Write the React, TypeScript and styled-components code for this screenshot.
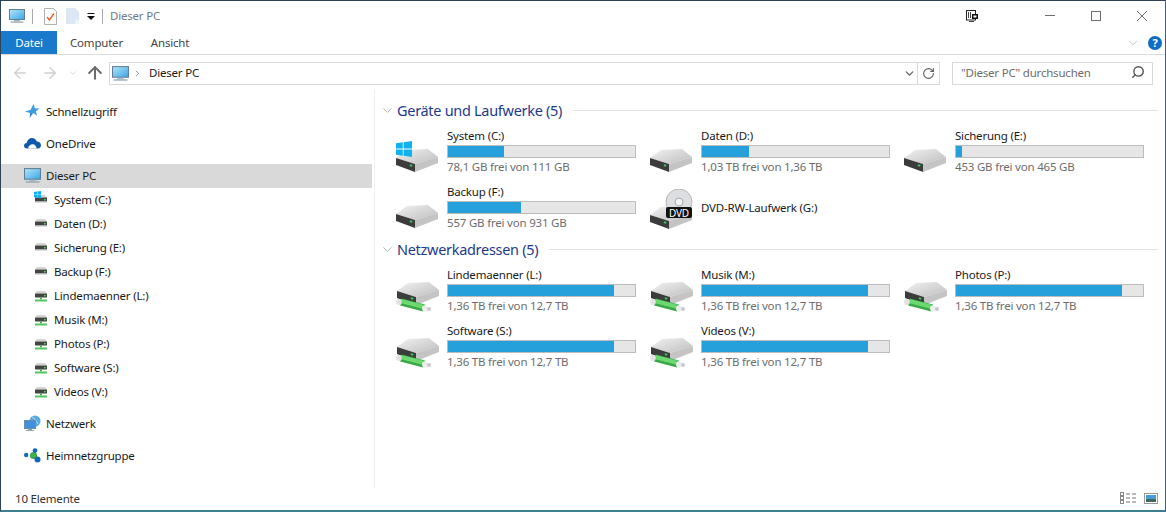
import React from "react";
import styled, { createGlobalStyle } from "styled-components";
import { ArrowLeft, ArrowRight, ArrowUp, ChevronDown, ChevronRight, RotateCw, Search } from "lucide-react";

const GlobalStyle = createGlobalStyle`
  html, body {
    margin: 0;
    padding: 0;
    background: #fff;
  }
  * {
    box-sizing: border-box;
  }
`;

const Window = styled.div`
  width: 1166px;
  height: 512px;
  display: flex;
  flex-direction: column;
  overflow: hidden;
  background: #fff;
  border: 1px solid #2d4254;
  border-right-color: #2b6a8f;
  border-bottom: 2px solid #3d7f8f;
  font-family: "Noto Sans", "Open Sans", sans-serif;
  font-size: 11.5px;
  letter-spacing: -0.2px;
  color: #1a1a1a;
`;

const TitleBar = styled.div`
  height: 30px;
  display: flex;
  align-items: center;
  padding-left: 8px;
`;

const QuickSlot = styled.div<{ $width: number }>`
  width: ${(p) => p.$width}px;
  display: flex;
  align-items: center;
  justify-content: center;
`;

const Separator = styled.div`
  width: 1px;
  height: 15px;
  background: #a9a9a9;
`;

const TitleText = styled.div`
  color: #6f7c88;
  padding-bottom: 2px;
`;

const TitleSpacer = styled.div`
  flex: 1;
`;

const PinSlot = styled.div`
  display: flex;
  margin-right: 49px;
`;

const WindowButton = styled.div`
  width: 46px;
  display: flex;
  justify-content: center;
`;

const Ribbon = styled.div`
  height: 24px;
  display: flex;
  align-items: stretch;
  border-bottom: 1px solid #dadbdc;
`;

const Tab = styled.div<{ $active?: boolean; $width: number }>`
  width: ${(p) => p.$width}px;
  display: flex;
  align-items: center;
  justify-content: center;
  background: ${(p) => (p.$active ? "#1979ca" : "transparent")};
  color: ${(p) => (p.$active ? "#fff" : "#444")};
`;

const RibbonRight = styled.div`
  margin-left: auto;
  display: flex;
  align-items: center;
  gap: 8px;
  padding-right: 3px;
  color: #a6a6a6;
`;

const HelpBadge = styled.div`
  width: 14px;
  height: 14px;
  border-radius: 50%;
  background: #0f6cc4;
  color: #fff;
  font-size: 11px;
  font-weight: 700;
  line-height: 14px;
  text-align: center;
`;

const AddressRow = styled.div`
  height: 35px;
  display: flex;
  align-items: center;
  padding-top: 1px;
`;

const NavArrows = styled.div`
  width: 108px;
  display: flex;
  align-items: center;
  padding-left: 4px;
`;

const NavArrow = styled.div<{ $width: number; $color: string }>`
  width: ${(p) => p.$width}px;
  display: flex;
  justify-content: center;
  color: ${(p) => p.$color};
`;

const AddressBox = styled.div`
  width: 831px;
  height: 23px;
  display: flex;
  align-items: center;
  border: 1px solid #d9d9d9;
  padding-left: 2px;
`;

const Crumb = styled.div`
  margin-left: 7px;
  padding-bottom: 2px;
  color: #1a1a1a;
`;

const CrumbChevron = styled.div`
  display: flex;
  margin-left: 4px;
  color: #666;
`;

const AddressTools = styled.div`
  margin-left: auto;
  display: flex;
  align-items: center;
  height: 100%;
  color: #5f5f5f;
`;

const AddressTool = styled.div<{ $divided?: boolean }>`
  width: ${(p) => (p.$divided ? 22 : 16)}px;
  height: 100%;
  display: flex;
  align-items: center;
  justify-content: center;
  border-left: ${(p) => (p.$divided ? "1px solid #d9d9d9" : "none")};
`;

const SearchBox = styled.div`
  width: 201px;
  height: 23px;
  margin-left: 12px;
  display: flex;
  align-items: center;
  justify-content: space-between;
  border: 1px solid #d9d9d9;
  padding: 0 7px 2px 8px;
  color: #6d6d6d;
`;

const FlippedSearch = styled(Search)`
  transform: scaleX(-1);
  color: #555;
`;

const Body = styled.div`
  flex: 1;
  display: flex;
  min-height: 0;
`;

const NavPane = styled.nav`
  width: 373px;
  padding: 10px 2px 0 0;
`;

const NavGroup = styled.div`
  margin-bottom: 8px;
`;

const NavRow = styled.div<{ $selected?: boolean; $child?: boolean }>`
  height: 24px;
  display: flex;
  align-items: center;
  padding-left: ${(p) => (p.$child ? 32 : 23)}px;
  padding-bottom: 2px;
  background: ${(p) => (p.$selected ? "#d9d9d9" : "transparent")};
`;

const NavIconSlot = styled.div<{ $child?: boolean }>`
  width: ${(p) => (p.$child ? 21 : 22)}px;
  display: flex;
  align-items: center;
`;

const Content = styled.main`
  flex: 1;
  border-left: 1px solid #f0f0f0;
  padding: 10px 0 0 5px;
`;

const GroupHeader = styled.div`
  height: 20px;
  margin-bottom: 7px;
  display: flex;
  align-items: center;
  color: #1e3a8a;
  font-size: 14.5px;
  letter-spacing: -0.3px;
`;

const GroupChevron = styled(ChevronDown)`
  color: #888;
  margin-right: 2px;
`;

const GroupRule = styled.div`
  flex: 1;
  height: 1px;
  margin: 0 7px 0 11px;
  background: #e2e2e2;
`;

const TileGrid = styled.div`
  display: grid;
  grid-template-columns: repeat(3, 254px);
  grid-auto-rows: 56px;
  padding-left: 12px;
`;

const Tile = styled.div`
  display: flex;
  align-items: flex-start;
`;

const TileIcon = styled.div`
  width: 55px;
  height: 56px;
  padding: 0 0 10px 4px;
  display: flex;
  align-items: flex-end;
`;

const TileText = styled.div`
  width: 189px;
  display: flex;
  flex-direction: column;
  padding-top: 1px;
`;

const TileName = styled.div`
  height: 17px;
  line-height: 15px;
  color: #1a1a1a;
`;

const TileCenter = styled(TileName)`
  height: 56px;
  line-height: 50px;
`;

const Meter = styled.div`
  height: 13px;
  border: 1px solid #bcbcbc;
  background: #e6e6e6;
`;

const MeterFill = styled.div`
  height: 100%;
  background: #26a0da;
`;

const TileSub = styled.div`
  height: 19px;
  line-height: 17px;
  color: #6d6d6d;
`;

const StatusBar = styled.footer`
  height: 22px;
  display: flex;
  align-items: center;
  justify-content: space-between;
  padding: 0 7px 2px 14px;
  color: #333;
`;

const ViewToggles = styled.div`
  display: flex;
  align-items: center;
  gap: 7px;
`;

const Monitor = ({ size = 16 }: { size?: number }) => (
  <svg width={size} height={size} viewBox="0 0 16 16">
    <defs>
      <linearGradient id="scr" x1="0" y1="0" x2="1" y2="1">
        <stop offset="0" stopColor="#b5e6fb" />
        <stop offset="1" stopColor="#3aa5e6" />
      </linearGradient>
    </defs>
    <rect x="0.5" y="1.5" width="15" height="10" fill="url(#scr)" stroke="#5f7f96" />
    <rect x="5" y="12" width="6" height="1.5" fill="#a9b8c4" />
    <rect x="1.5" y="13.5" width="13" height="1.2" fill="#8fa3b1" />
  </svg>
);

const PropertiesIcon = () => (
  <svg width="13" height="17" viewBox="0 0 13 17">
    <path d="M.5.5h9l3 3v13H.5z" fill="#fff" stroke="#b0b0b0" />
    <path d="M3 9l2.5 3L10 5.5" fill="none" stroke="#e8622a" strokeWidth="1.4" />
  </svg>
);

const PalePageIcon = () => (
  <svg width="13" height="16" viewBox="0 0 13 16">
    <path d="M0 0h9l4 4v12H0z" fill="#dce6f4" />
    <path d="M9 12h4v4H9z" fill="#eef3fa" />
  </svg>
);

const CustomizeIcon = () => (
  <svg width="8" height="7" viewBox="0 0 8 7">
    <rect x="0.5" width="7" height="1" fill="#111" />
    <path d="M0 3h8L4 7z" fill="#111" />
  </svg>
);

const PinIcon = () => (
  <svg width="12" height="12" viewBox="0 0 12 12">
    <rect x="0.5" y="0.5" width="9" height="9.5" fill="#fff" stroke="#222" />
    <path d="M2.5 2v6M4.5 2v6" stroke="#444" />
    <rect x="6" y="4" width="6" height="5" fill="#111" />
    <rect x="7.5" y="5.5" width="3" height="2" fill="#fff" />
    <path d="M3 11.5h5" stroke="#444" />
  </svg>
);

const MinimizeGlyph = () => (
  <svg width="10" height="10" viewBox="0 0 10 10">
    <path d="M0 4.5h10" stroke="#6e6e6e" />
  </svg>
);

const MaximizeGlyph = () => (
  <svg width="10" height="10" viewBox="0 0 10 10">
    <rect x="0.5" y="0.5" width="9" height="9" fill="none" stroke="#6e6e6e" />
  </svg>
);

const CloseGlyph = () => (
  <svg width="10" height="10" viewBox="0 0 10 10">
    <path d="M0 0l10 10M10 0L0 10" stroke="#6e6e6e" />
  </svg>
);

const DriveBody = () => (
  <>
    <path d="M0 9L11 1 32 0 42 8 19 15z" fill="url(#driveTop)" />
    <path d="M0 9L19 15V23L0 16z" fill="#3c3c3c" />
    <path d="M19 15L42 8V14L19 23z" fill="#c4c4c4" />
    <rect x="14" y="15.5" width="2.4" height="2" fill="#35d05a" transform="rotate(18 15 16)" />
  </>
);

const DriveDefs = () => (
  <defs>
    <linearGradient id="driveTop" x1="0" y1="0" x2="1" y2="1">
      <stop offset="0" stopColor="#f2f2f2" />
      <stop offset="1" stopColor="#bdbdbd" />
    </linearGradient>
  </defs>
);

const WinLogo = ({ x, y, s }: { x: number; y: number; s: number }) => (
  <g transform={`translate(${x} ${y}) scale(${s})`} fill="#0fb2ee">
    <path d="M0 2.3L6.8 1.3V7.6H0z" />
    <path d="M7.6 1.2L16 0V7.6H7.6z" />
    <path d="M0 8.4H6.8V14.7L0 13.7z" />
    <path d="M7.6 8.4H16V16L7.6 14.8z" />
  </g>
);

type DriveKind = "local" | "system" | "dvd" | "net";

const TileDrive = ({ kind }: { kind: DriveKind }) => {
  if (kind === "net") {
    return (
      <svg width="46" height="30" viewBox="0 0 46 30">
        <DriveDefs />
        <g transform="translate(1 0)">
          <DriveBody />
        </g>
        <path d="M5 20l23 6" stroke="#3aa846" strokeWidth="7" />
        <path d="M5 19l23 6" stroke="#6bd96f" strokeWidth="4" />
        <ellipse cx="3" cy="20" rx="2.8" ry="3" fill="#e2e2e2" />
        <ellipse cx="29" cy="26.5" rx="3" ry="3" fill="#ededed" />
        <ellipse cx="33" cy="27" rx="2" ry="2" fill="#c9c9c9" />
      </svg>
    );
  }
  if (kind === "dvd") {
    return (
      <svg width="44" height="40" viewBox="0 0 44 40">
        <DriveDefs />
        <g transform="translate(0 17)">
          <DriveBody />
        </g>
        <circle cx="29" cy="13" r="13" fill="#dcdee2" stroke="#b8b8b8" />
        <circle cx="29" cy="13" r="4" fill="#f2f2f2" stroke="#aaa" />
        <rect x="16" y="18" width="26" height="11" rx="2" fill="#111" />
        <text x="29" y="27.5" textAnchor="middle" fill="#fff" fontSize="10" fontFamily="Noto Sans, sans-serif">
          DVD
        </text>
      </svg>
    );
  }
  if (kind === "system") {
    return (
      <svg width="44" height="32" viewBox="0 0 44 32">
        <DriveDefs />
        <g transform="translate(0 8)">
          <DriveBody />
        </g>
        <WinLogo x={0} y={0} s={1} />
      </svg>
    );
  }
  return (
    <svg width="44" height="24" viewBox="0 0 44 24">
      <DriveDefs />
      <DriveBody />
    </svg>
  );
};

const SmallDrive = ({ kind }: { kind: DriveKind }) => (
  <svg width="16" height="16" viewBox="0 0 16 16">
    <path d="M2 6.5L4 4h8l2 2.5z" fill="#d4d4d4" />
    <rect x="2" y="6.5" width="12" height="4" fill="#444" />
    <rect x="11" y="8" width="1.6" height="1.4" fill="#3ddc62" />
    {kind === "net" ? (
      <>
        <rect x="7" y="10.5" width="2" height="2" fill="#3fb54a" />
        <rect x="2" y="12.5" width="12" height="2" fill="#55c65f" />
      </>
    ) : (
      <path d="M2 10.5h12v1H2z" fill="#bbb" />
    )}
    {kind === "system" ? <WinLogo x={1} y={0} s={0.45} /> : null}
  </svg>
);

const StarIcon = () => (
  <svg width="16" height="16" viewBox="0 0 16 16">
    <path
      d="M9.5 1l1.4 4.3 4.6.1-3.7 2.8 1.3 4.5-3.7-2.7L5.6 15l1-4.9L1 8.4l5.6-1.6z"
      fill="#3f9be0"
    />
    <path d="M1 8.4l5.6 1.7-1 4.9 2-5z" fill="#1c68b4" />
  </svg>
);

const CloudIcon = () => (
  <svg width="17" height="12" viewBox="0 0 17 12">
    <path
      d="M3 11.5C1 11.5 0 10 0 8.7 0 7.2 1.2 6 2.6 6 3.2 3 5.5 1 8 1c2.2 0 4 1.3 4.8 3.4 2.3 0 4.2 1.7 4.2 3.9 0 1.8-1.3 3.2-3 3.2z"
      fill="#0f58b0"
    />
    <path d="M4 11.5c.4-2.5 2.3-4.3 4.7-4.3 2 0 3.6 1.6 4 4.3" fill="#fff" />
  </svg>
);

const NetworkIcon = () => (
  <svg width="17" height="17" viewBox="0 0 17 17">
    <circle cx="11" cy="6" r="5.5" fill="#58a9e4" />
    <path d="M8 2c2 1 4 3 6 7" stroke="#b9def7" fill="none" />
    <rect x="0.5" y="5.5" width="11" height="8" fill="#3f90dc" stroke="#6d8ca5" />
    <rect x="4" y="14" width="4" height="1" fill="#8fa3b1" />
    <rect x="2" y="15" width="8" height="1" fill="#8fa3b1" />
  </svg>
);

const HomegroupIcon = () => (
  <svg width="17" height="15" viewBox="0 0 17 15">
    <circle cx="2.2" cy="7" r="2.2" fill="#1467b8" />
    <circle cx="9.5" cy="7.5" r="3.6" fill="#3cae4b" />
    <circle cx="11" cy="2.6" r="2.4" fill="#1467b8" />
    <circle cx="13.5" cy="11.5" r="3" fill="#1467b8" />
  </svg>
);

const DetailsViewIcon = () => (
  <svg width="17" height="13" viewBox="0 0 17 13">
    <rect x="0.5" y="0.5" width="3" height="3" fill="#fff" stroke="#888" />
    <rect x="0.5" y="4.5" width="3" height="3" fill="#fff" stroke="#888" />
    <rect x="0.5" y="8.5" width="3" height="3" fill="#fff" stroke="#888" />
    <path d="M6 2h4M12 2h4M6 6h4M12 6h4M6 10h4M12 10h4" stroke="#777" />
  </svg>
);

const TilesViewIcon = () => (
  <svg width="14" height="11" viewBox="0 0 14 11">
    <rect x="0.5" y="0.5" width="13" height="10" fill="#fff" stroke="#999" />
    <rect x="2" y="2" width="10" height="4" fill="#4a9ad6" />
    <rect x="2" y="6" width="10" height="3" fill="#3f6a58" />
  </svg>
);

interface DriveData {
  name: string;
  free?: string;
  pct?: number;
  kind: DriveKind;
}

const localDrives: DriveData[] = [
  { name: "System (C:)", free: "78,1 GB frei von 111 GB", pct: 30, kind: "system" },
  { name: "Daten (D:)", free: "1,03 TB frei von 1,36 TB", pct: 25, kind: "local" },
  { name: "Sicherung (E:)", free: "453 GB frei von 465 GB", pct: 3, kind: "local" },
  { name: "Backup (F:)", free: "557 GB frei von 931 GB", pct: 39, kind: "local" },
  { name: "DVD-RW-Laufwerk (G:)", kind: "dvd" },
];

const netDrives: DriveData[] = ["Lindemaenner (L:)", "Musik (M:)", "Photos (P:)", "Software (S:)", "Videos (V:)"].map(
  (name) => ({ name, free: "1,36 TB frei von 12,7 TB", pct: 89, kind: "net" as DriveKind })
);

const DriveTile = ({ drive }: { drive: DriveData }) => (
  <Tile>
    <TileIcon>
      <TileDrive kind={drive.kind} />
    </TileIcon>
    {drive.pct === undefined ? (
      <TileCenter>{drive.name}</TileCenter>
    ) : (
      <TileText>
        <TileName>{drive.name}</TileName>
        <Meter>
          <MeterFill style={{ width: `${drive.pct}%` }} />
        </Meter>
        <TileSub>{drive.free}</TileSub>
      </TileText>
    )}
  </Tile>
);

const App = () => (
  <Window>
    <GlobalStyle />
    <TitleBar>
      <Monitor />
      <QuickSlot $width={15}>
        <Separator />
      </QuickSlot>
      <QuickSlot $width={4} />
      <PropertiesIcon />
      <QuickSlot $width={9} />
      <PalePageIcon />
      <QuickSlot $width={8} />
      <CustomizeIcon />
      <QuickSlot $width={15}>
        <Separator />
      </QuickSlot>
      <TitleText>Dieser PC</TitleText>
      <TitleSpacer />
      <PinSlot>
        <PinIcon />
      </PinSlot>
      <WindowButton>
        <MinimizeGlyph />
      </WindowButton>
      <WindowButton>
        <MaximizeGlyph />
      </WindowButton>
      <WindowButton>
        <CloseGlyph />
      </WindowButton>
    </TitleBar>
    <Ribbon>
      <Tab $active $width={56}>
        Datei
      </Tab>
      <Tab $width={79}>Computer</Tab>
      <Tab $width={68}>Ansicht</Tab>
      <RibbonRight>
        <ChevronDown size={14} strokeWidth={1.2} />
        <HelpBadge>?</HelpBadge>
      </RibbonRight>
    </Ribbon>
    <AddressRow>
      <NavArrows>
        <NavArrow $width={30} $color="#d0d0d0">
          <ArrowLeft size={18} strokeWidth={1.8} />
        </NavArrow>
        <NavArrow $width={30} $color="#d0d0d0">
          <ArrowRight size={18} strokeWidth={1.8} />
        </NavArrow>
        <NavArrow $width={16} $color="#d0d0d0">
          <ChevronDown size={10} strokeWidth={2} />
        </NavArrow>
        <NavArrow $width={28} $color="#6a6a6a">
          <ArrowUp size={20} strokeWidth={2.4} />
        </NavArrow>
      </NavArrows>
      <AddressBox>
        <Monitor size={17} />
        <CrumbChevron>
          <ChevronRight size={9} strokeWidth={2} />
        </CrumbChevron>
        <Crumb>Dieser PC</Crumb>
        <AddressTools>
          <AddressTool>
            <ChevronDown size={13} strokeWidth={2.4} />
          </AddressTool>
          <AddressTool $divided>
            <RotateCw size={13} strokeWidth={2} />
          </AddressTool>
        </AddressTools>
      </AddressBox>
      <SearchBox>
        "Dieser PC" durchsuchen
        <FlippedSearch size={14} strokeWidth={2.4} />
      </SearchBox>
    </AddressRow>
    <Body>
      <NavPane>
        <NavGroup>
          <NavRow>
            <NavIconSlot>
              <StarIcon />
            </NavIconSlot>
            Schnellzugriff
          </NavRow>
        </NavGroup>
        <NavGroup>
          <NavRow>
            <NavIconSlot>
              <CloudIcon />
            </NavIconSlot>
            OneDrive
          </NavRow>
        </NavGroup>
        <NavGroup>
          <NavRow $selected>
            <NavIconSlot>
              <Monitor size={17} />
            </NavIconSlot>
            Dieser PC
          </NavRow>
          {[...localDrives.slice(0, 4), ...netDrives].map((d) => (
            <NavRow $child key={d.name}>
              <NavIconSlot $child>
                <SmallDrive kind={d.kind} />
              </NavIconSlot>
              {d.name}
            </NavRow>
          ))}
        </NavGroup>
        <NavGroup>
          <NavRow>
            <NavIconSlot>
              <NetworkIcon />
            </NavIconSlot>
            Netzwerk
          </NavRow>
        </NavGroup>
        <NavGroup>
          <NavRow>
            <NavIconSlot>
              <HomegroupIcon />
            </NavIconSlot>
            Heimnetzgruppe
          </NavRow>
        </NavGroup>
      </NavPane>
      <Content>
        <GroupHeader>
          <GroupChevron size={15} strokeWidth={1} />
          Geräte und Laufwerke (5)
          <GroupRule />
        </GroupHeader>
        <TileGrid>
          {localDrives.map((d) => (
            <DriveTile drive={d} key={d.name} />
          ))}
        </TileGrid>
        <GroupHeader>
          <GroupChevron size={15} strokeWidth={1} />
          Netzwerkadressen (5)
          <GroupRule />
        </GroupHeader>
        <TileGrid>
          {netDrives.map((d) => (
            <DriveTile drive={d} key={d.name} />
          ))}
        </TileGrid>
      </Content>
    </Body>
    <StatusBar>
      10 Elemente
      <ViewToggles>
        <DetailsViewIcon />
        <TilesViewIcon />
      </ViewToggles>
    </StatusBar>
  </Window>
);

export default App;
